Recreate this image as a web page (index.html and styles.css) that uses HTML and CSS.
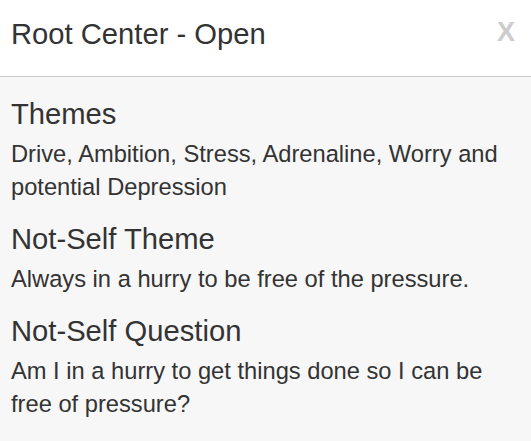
FILE: index.html
```html
<!DOCTYPE html>
<html>
<head>
<meta charset="utf-8">
<link rel="stylesheet" href="styles.css">
</head>
<body>
<div class="modal">
  <div class="modal-header">
    <h4 class="modal-title">Root Center - Open</h4>
    <button class="close" type="button">X</button>
  </div>
  <div class="modal-body">
    <section class="block">
      <h3 class="block-title">Themes</h3>
      <p class="block-text">Drive, Ambition, Stress, Adrenaline, Worry and potential Depression</p>
    </section>
    <section class="block">
      <h3 class="block-title">Not-Self Theme</h3>
      <p class="block-text">Always in a hurry to be free of the pressure.</p>
    </section>
    <section class="block">
      <h3 class="block-title">Not-Self Question</h3>
      <p class="block-text">Am I in a hurry to get things done so I can be free of pressure?</p>
    </section>
  </div>
</div>
</body>
</html>
```

FILE: styles.css
```css
html, body {
  margin: 0;
  padding: 0;
  height: 100%;
}
body {
  background: #f7f7f7;
  font-family: "Liberation Sans", Arial, sans-serif;
  color: #333333;
}
.modal {
  width: 531px;
  min-height: 441px;
  background: #f7f7f7;
}
.modal-header {
  background: #ffffff;
  height: 77px;
  border-bottom: 1px solid #c8c8c8;
  display: flex;
  align-items: center;
  justify-content: space-between;
  padding: 0 16px 0 11px;
  box-sizing: border-box;
}
.modal-title {
  margin: 0;
  font-size: 29.2px;
  font-weight: normal;
  line-height: 32px;
  margin-top: -8px;
}
.close {
  border: 0;
  background: none;
  padding: 0;
  font-family: "Liberation Sans", Arial, sans-serif;
  font-weight: bold;
  font-size: 27px;
  line-height: 30px;
  color: #cccccc;
  margin-top: -12px;
}
.modal-body {
  padding: 21px 11px 0 11px;
  display: flex;
  flex-direction: column;
  gap: 19px;
}
.block-title {
  margin: 0 0 8px 0;
  font-size: 29.2px;
  font-weight: normal;
  line-height: 32px;
}
.block-text {
  margin: 0;
  font-size: 23.7px;
  line-height: 33px;
}
```
